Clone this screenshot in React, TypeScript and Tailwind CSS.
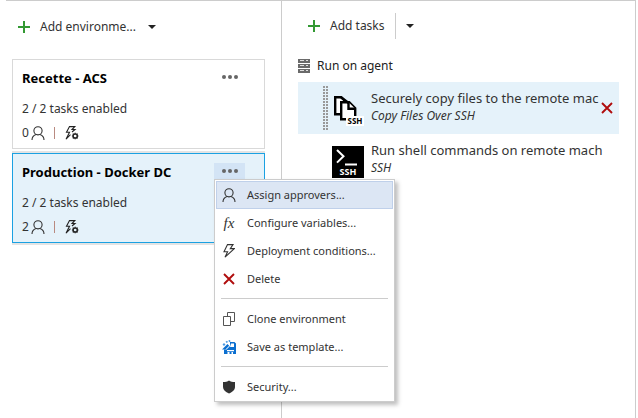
import type { ReactNode } from "react";

function PlusIcon() {
  return (
    <svg width="12" height="12" viewBox="0 0 12 12" aria-hidden="true" shapeRendering="crispEdges">
      <path d="M5 0h2v5h5v2H7v5H5V7H0V5h5z" fill="#339933" />
    </svg>
  );
}

function CaretIcon() {
  return (
    <svg width="8" height="4" viewBox="0 0 8 4" aria-hidden="true">
      <path d="M0 0h8L4 4z" fill="#222" />
    </svg>
  );
}

function PersonIcon() {
  return (
    <svg width="14" height="14" viewBox="0 0 14 14" fill="none" stroke="#333" strokeWidth="1.1" aria-hidden="true">
      <circle cx="7" cy="4.8" r="4.1" />
      <path d="M1 14c0-3 1.7-4.8 4-5.6M13 14c0-3-1.7-4.8-4-5.6" />
    </svg>
  );
}

function TriggerIcon() {
  return (
    <svg width="14" height="14" viewBox="0 0 14 14" fill="none" stroke="#222" strokeWidth="1.1" aria-hidden="true">
      <path d="M7 6L10 3.500H7L9.800.6H4.500L1.500 6.200h3L1 13.200l4.500-4.500" />
      <circle cx="10.200" cy="10" r="2.100" strokeWidth="1.500" />
      <path d="M10.200 6.700v1M10.200 12.300v1M6.900 10h1M12.500 10h1M7.800 7.600l.7.7M11.900 11.700l.7.7M12.600 7.600l-.7.7M8.500 11.700l-.7.7" strokeWidth="1.2" />
    </svg>
  );
}

function BoltIcon() {
  return (
    <svg width="12" height="14" viewBox="0 0 12 14" fill="none" stroke="#333" strokeWidth="1.1" aria-hidden="true">
      <path d="M4.500.6h5.500L7.300 4.600h4L2 13.200l2.600-5.400H1z" />
    </svg>
  );
}

function CrossIcon() {
  return (
    <svg width="12" height="12" viewBox="0 0 12 12" fill="none" stroke="#b00d0d" strokeWidth="1.9" aria-hidden="true">
      <path d="M1 1l10 10M11 1L1 11" />
    </svg>
  );
}

function CloneIcon() {
  return (
    <svg width="12" height="14" viewBox="0 0 12 14" fill="none" stroke="#555" aria-hidden="true">
      <path d="M.5 4.500h7v9h-7zM4.500 4.500v-4h7v9h-4" />
    </svg>
  );
}

function TemplateIcon() {
  return (
    <svg width="14" height="14" viewBox="0 0 14 14" aria-hidden="true">
      <path d="M8 2h4.500L14 3.500V14H2V9.500h2.500L8 6z" fill="#0b6fd0" />
      <path d="M9 3.500h3V7H8z" fill="#fff" />
      <path d="M5 10h7v1.200H5zM5.500 12h2v2h-2zM9.500 12h1.500v2H9.500z" fill="#fff" />
      <path d="M0 9.500L5.500 4l1.700 1.700-3.800 3.800z" fill="#0b6fd0" />
      <path d="M.5 4.500L2 3l1.500 1.500L2 6zM3.500 1.800L5 .8l1 1.200-1.300 1zM6.500.3L8 0l.5 1.500-1.500.7z" fill="#4a98e0" />
    </svg>
  );
}

function ShieldIcon() {
  return (
    <svg width="12" height="14" viewBox="0 0 12 14" aria-hidden="true">
      <path d="M6 .5c1.500 1.200 3.500 1.600 6 1.600V7c0 3-2.500 5-6 6.500C2.500 12 0 10 0 7V2.100C2.500 2.100 4.500 1.700 6 .5z" fill="#333" />
    </svg>
  );
}

function ServerIcon() {
  return (
    <svg width="12" height="14" viewBox="0 0 12 14" aria-hidden="true" shapeRendering="crispEdges">
      <path d="M0 0h12v4H0zM0 5h12v4H0zM0 10h12v4H0z" fill="#6a6a6a" />
      <path d="M2 1h4v1H2zM8 1h2v1H8zM2 6h4v1H2zM8 6h2v1H8zM2 11h4v1H2zM8 11h2v1H8z" fill="#ddd" />
    </svg>
  );
}

function CopySshIcon() {
  return (
    <svg width="32" height="32" viewBox="0 0 32 32" aria-hidden="true">
      <g fill="#fff" stroke="#000" strokeWidth="2.4">
        <path d="M3.200 3.200h6l5 5v12h-11z" />
        <path d="M9.200 8.200h8l6 6v11h-14z" />
        <path d="M16.500 8.200v6.500h6.700" />
        <path d="M9 3.200l8 6" />
      </g>
      <path d="M14 22h18v10H14z" fill="#fff" />
      <text x="23" y="30" textAnchor="middle" fontFamily="Noto Sans, sans-serif" fontWeight="700" fontSize="8">SSH</text>
    </svg>
  );
}

function ShellSshIcon() {
  return (
    <svg width="32" height="32" viewBox="0 0 32 32" aria-hidden="true">
      <path d="M0 0h32v32H0z" />
      <path d="M5 4l6.500 6.300L5 16.600M13 18.500h12" fill="none" stroke="#fff" strokeWidth="2" />
      <text x="16" y="29" textAnchor="middle" fill="#fff" fontFamily="Noto Sans, sans-serif" fontWeight="700" fontSize="9">SSH</text>
    </svg>
  );
}

function Grip() {
  const rows = Array.from({ length: 15 }, (_, i) => i * 3);
  return (
    <svg width="5" height="44" viewBox="0 0 5 44" fill="#999" aria-hidden="true" shapeRendering="crispEdges">
      {rows.map((y) => (
        <path key={y} d={`M0 ${y}h2v2h-2zM3 ${y}h2v2h-2z`} />
      ))}
    </svg>
  );
}

function MenuItem({ icon, label, active = false }: { icon: ReactNode; label: string; active?: boolean }) {
  return (
    <button
      role="menuitem"
      className={`flex h-7 w-full items-center border pl-1 text-left whitespace-nowrap ${
        active ? "border-[#bfd0ea] bg-[#dce6f4]" : "border-transparent bg-white"
      }`}
    >
      <span className="flex w-4 shrink-0 justify-center">{icon}</span>
      <span className="pl-[10px]">{label}</span>
    </button>
  );
}

function MenuSeparator() {
  return <hr className="mx-[5px] mt-[5px] mb-[6px] border-t border-[#ccc]" />;
}

function EnvironmentMenu() {
  return (
    <div
      role="menu"
      className="absolute top-full left-0 z-10 w-[181px] border border-[#ccc] bg-white px-px pt-px text-[11px] text-[#333] shadow-[3px_3px_4px_rgba(0,0,0,0.25)]"
    >
      <MenuItem icon={<PersonIcon />} label="Assign approvers..." active />
      <MenuItem
        icon={<span className="font-['Liberation_Serif',serif] text-[15px] italic">fx</span>}
        label="Configure variables..."
      />
      <MenuItem icon={<BoltIcon />} label="Deployment conditions..." />
      <MenuItem icon={<CrossIcon />} label="Delete" />
      <MenuSeparator />
      <MenuItem icon={<CloneIcon />} label="Clone environment" />
      <MenuItem icon={<TemplateIcon />} label="Save as template..." />
      <MenuSeparator />
      <MenuItem icon={<ShieldIcon />} label="Security..." />
    </div>
  );
}

function EnvironmentCard({ name, approvers, selected = false }: { name: string; approvers: number; selected?: boolean }) {
  return (
    <article
      className={`border pt-[9px] pr-[19px] pb-1 pl-[9px] ${
        selected
          ? "border-[#1ba1e2] bg-[#e5f2fa] shadow-[0_2px_0_#e4e4e4,0_-2px_0_#e4e4e4]"
          : "border-[#d9d9d9] bg-white"
      }`}
    >
      <div className="flex h-[18px] items-start justify-between">
        <h2 className="text-[13px] leading-[18px] font-bold text-black">{name}</h2>
        <div className="relative">
          <button
            aria-label={`More actions for ${name}`}
            aria-haspopup="menu"
            className={`flex h-4 w-[31px] items-center justify-center gap-[2px] ${selected ? "bg-[#d3e4f5]" : ""}`}
          >
            <span className="size-1 rounded-full bg-[#666]" />
            <span className="size-1 rounded-full bg-[#666]" />
            <span className="size-1 rounded-full bg-[#666]" />
          </button>
          {selected && <EnvironmentMenu />}
        </div>
      </div>
      <p className="mt-3 leading-5">2 / 2 tasks enabled</p>
      <div className="mt-[3px] flex h-[22px] items-center">
        <span className="w-[9px]">{approvers}</span>
        <PersonIcon />
        <span className="mr-[10px] ml-[9px] h-3 w-px bg-[#b98a80]" />
        <TriggerIcon />
      </div>
    </article>
  );
}

function TaskRow({ icon, title, kind, selected = false }: { icon: ReactNode; title: string; kind: string; selected?: boolean }) {
  return (
    <li className={`relative flex h-[52px] pr-[6px] ${selected ? "bg-[#e5f2fa]" : ""}`}>
      <div className="flex w-[34px] shrink-0 items-center justify-end pr-1">{selected && <Grip />}</div>
      <div className="w-8 shrink-0 pt-3">{icon}</div>
      <div className="min-w-0 flex-1 pt-2 pl-[7px] leading-[17px]">
        <div className="overflow-hidden text-[13px] whitespace-nowrap">{title}</div>
        <div className="italic">{kind}</div>
      </div>
      {selected && (
        <button aria-label="Remove task" className="absolute inset-y-0 right-[6px]">
          <CrossIcon />
        </button>
      )}
    </li>
  );
}

export default function App() {
  return (
    <div className="mr-[2px] ml-[6px] flex min-h-screen border-t border-[#ccc] bg-white font-['Noto_Sans',sans-serif] text-[12px] text-[#333]">
      <section className="w-[276px] shrink-0 border-r border-[#ccc] pr-4 pl-[6px]">
        <header className="flex h-[52px] items-center">
          <button className="flex items-center gap-[10px] pl-[6px]">
            <PlusIcon />
            <span>Add environme...</span>
          </button>
          <button aria-label="More ways to add an environment" className="ml-3">
            <CaretIcon />
          </button>
        </header>
        <div className="flex flex-col gap-1 pt-[6px]">
          <EnvironmentCard name="Recette - ACS" approvers={0} />
          <EnvironmentCard name="Production - Docker DC" approvers={2} selected />
        </div>
      </section>

      <main className="min-w-0 flex-1 border-r border-[#ccc] px-4">
        <header className="flex h-[49px] items-center">
          <button className="flex items-center gap-[10px] pl-[10px]">
            <PlusIcon />
            <span>Add tasks</span>
          </button>
          <span className="mx-[10px] h-[26px] w-px bg-[#ccc]" />
          <button aria-label="More ways to add tasks">
            <CaretIcon />
          </button>
        </header>
        <div className="flex h-8 items-center gap-[7px] text-[#222]">
          <ServerIcon />
          <h3>Run on agent</h3>
        </div>
        <ul>
          <TaskRow
            icon={<CopySshIcon />}
            title="Securely copy files to the remote mac"
            kind="Copy Files Over SSH"
            selected
          />
          <TaskRow icon={<ShellSshIcon />} title="Run shell commands on remote mach" kind="SSH" />
        </ul>
      </main>
    </div>
  );
}
